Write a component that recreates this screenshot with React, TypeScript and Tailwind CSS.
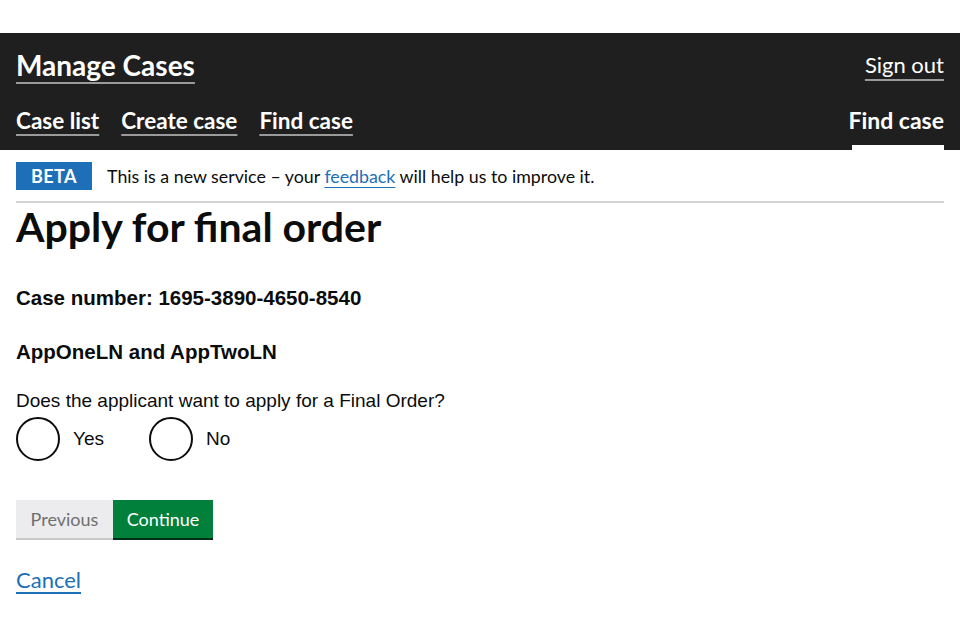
import { Fragment } from "react";

const navLinks = ["Case list", "Create case", "Find case"];

function Header() {
  return (
    <header className="bg-[#1f1f1f] px-4 text-white [font-family:Lato,'Noto_Sans',sans-serif]">
      <div className="flex items-start justify-between pt-[14px]">
        <a href="#" className="text-[28px] font-bold leading-[36px] underline decoration-[#9a9a9a] decoration-2 underline-offset-[6px]">
          Manage Cases
        </a>
        <a href="#" className="text-[22px] leading-[36px] underline decoration-[#9a9a9a] decoration-2 underline-offset-[6px]">
          Sign out
        </a>
      </div>
      <nav className="mt-[23px] flex items-end justify-between">
        <div className="flex gap-[22px] pb-[15px]">
          {navLinks.map((l) => (
            <a
              key={l}
              href="#"
              className="text-[22.5px] font-bold leading-[28px] underline decoration-[#9a9a9a] decoration-2 underline-offset-[5px]"
            >
              {l}
            </a>
          ))}
        </div>
        <div className="flex flex-col items-end">
          <span className="text-[23px] font-bold leading-[28px]">Find case</span>
          <span className="mt-[11px] h-[5px] w-[92px] bg-white" />
        </div>
      </nav>
    </header>
  );
}

export default function App() {
  return (
    <div className="h-[640px] overflow-hidden bg-white pt-[33px]">
      <Header />
      <main className="px-4">
        <div className="flex items-center gap-[15px] border-b-2 border-[#d4d4d4] pb-[11px] pt-[12px]">
          <strong className="bg-[#1d70b8] px-[15px] py-[3px] text-[18px] font-bold leading-[22px] tracking-wide text-white [font-family:Lato,sans-serif]">
            BETA
          </strong>
          <p className="text-[17.8px] text-[#0b0c0c] [font-family:Lato,sans-serif]">
            This is a new service – your{" "}
            <a href="#" className="text-[#1d70b8] underline decoration-[#1d70b8] underline-offset-[4px]">
              feedback
            </a>{" "}
            will help us to improve it.
          </p>
        </div>

        <h1 className="mt-[1px] text-[41px] font-bold leading-[46px] text-[#0b0c0c] [font-family:Lato,sans-serif]">
          Apply for final order
        </h1>

        <div className="[font-family:'Liberation_Sans',Arial,sans-serif] text-[#0b0c0c]">
          <h2 className="mt-[35px] text-[20.5px] font-bold leading-[26px]">
            Case number: 1695-3890-4650-8540
          </h2>
          <h2 className="mt-[28px] text-[20.5px] font-bold leading-[26px]">AppOneLN and AppTwoLN</h2>

          <fieldset className="mt-[24px]">
            <legend className="text-[19px] leading-[24px]">Does the applicant want to apply for a Final Order?</legend>
            <div className="mt-[4px] flex gap-[13px]">
              {["Yes", "No"].map((o) => (
                <Fragment key={o}>
                  <label className="flex w-[120px] items-center gap-[13px]">
                    <span className="h-[44px] w-[44px] rounded-full border-2 border-[#0b0c0c]" />
                    <span className="text-[19px]">{o}</span>
                  </label>
                </Fragment>
              ))}
            </div>
          </fieldset>
        </div>

        <div className="mt-[39px] flex [font-family:Lato,sans-serif]">
          <button className="h-[38px] w-[97px] bg-[#ececee] text-[18px] text-[#6f6f6f] shadow-[0_2px_0_#c8c8c8]">
            Previous
          </button>
          <button className="h-[38px] w-[100px] bg-[#00803a] text-[18px] text-white shadow-[0_2px_0_#002d18]">
            Continue
          </button>
        </div>

        <a
          href="#"
          className="mt-[25px] inline-block text-[22px] text-[#1d70b8] underline decoration-[#1d70b8] underline-offset-[4px] [font-family:Lato,sans-serif]"
        >
          Cancel
        </a>
      </main>
    </div>
  );
}
